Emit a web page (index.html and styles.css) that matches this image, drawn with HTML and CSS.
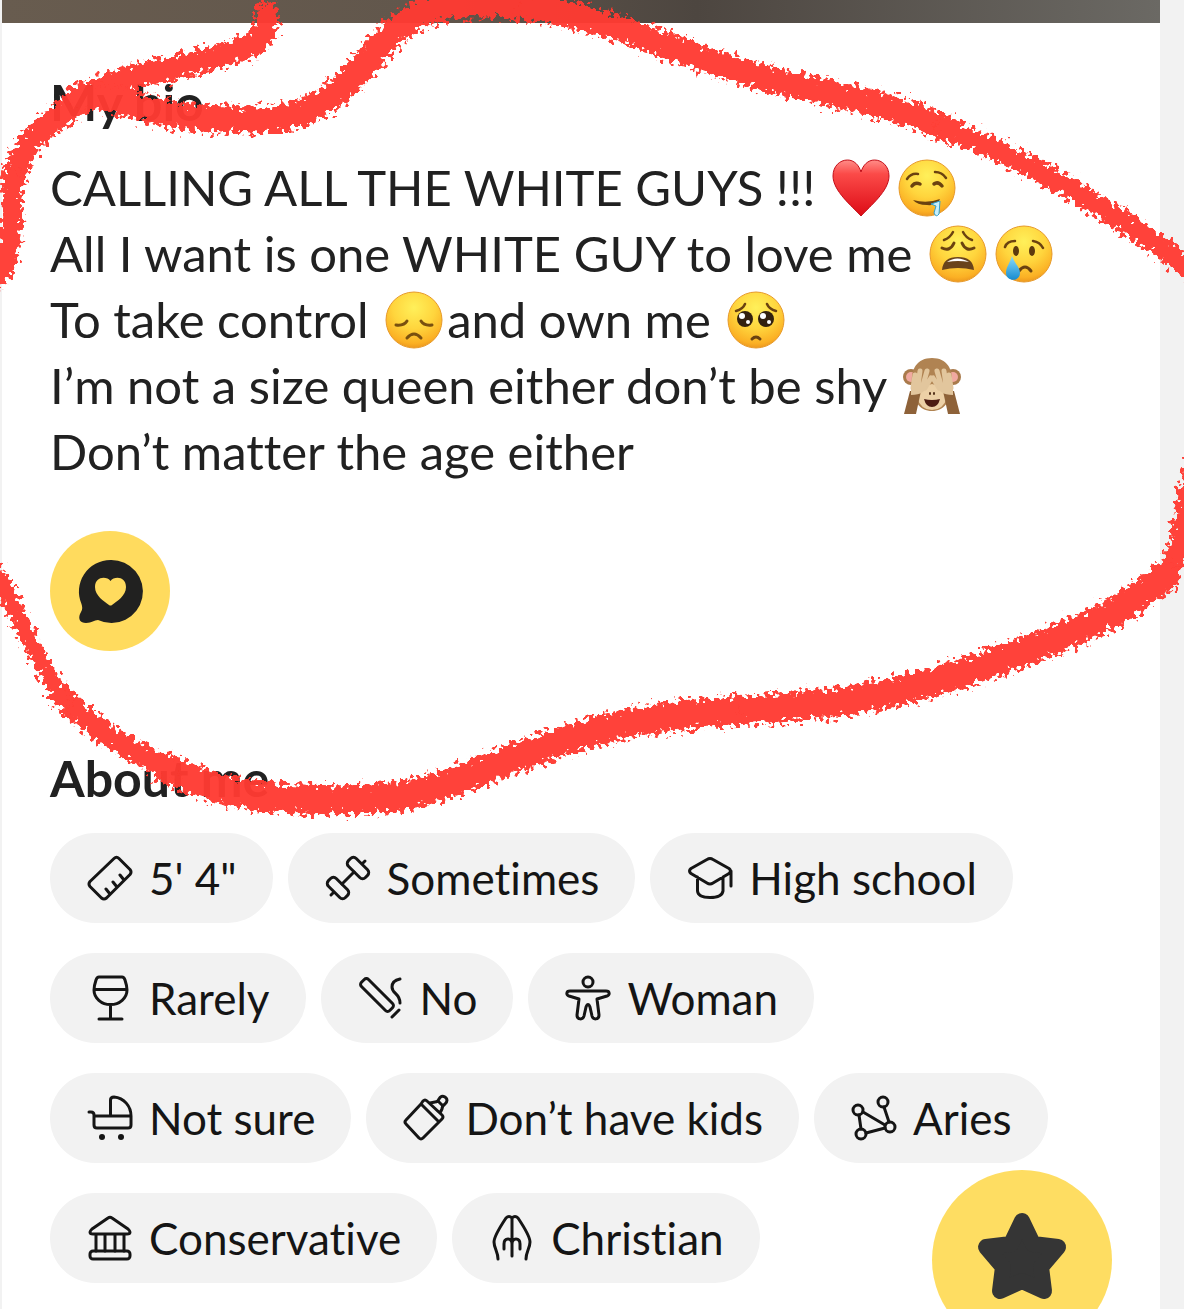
FILE: index.html
```html
<!DOCTYPE html>
<html lang="en">
<head>
  <meta charset="UTF-8">
  <meta name="viewport" content="width=device-width, initial-scale=1.0">
  <title>Profile</title>
  <link rel="stylesheet" href="styles.css">
</head>
<body>
  <!-- Shared emoji gradients -->
  <svg class="defs" aria-hidden="true">
    <defs>
      <radialGradient id="face" cx="50%" cy="28%" r="75%">
        <stop offset="0" stop-color="#fff05a"/>
        <stop offset="0.5" stop-color="#ffd53d"/>
        <stop offset="0.85" stop-color="#fbb024"/>
        <stop offset="1" stop-color="#e8901c"/>
      </radialGradient>
      <linearGradient id="heart" x1="0" y1="0" x2="0" y2="1">
        <stop offset="0" stop-color="#ff8d88"/>
        <stop offset="0.25" stop-color="#fb4a48"/>
        <stop offset="1" stop-color="#dd0b16"/>
      </linearGradient>
      <linearGradient id="tear" x1="0" y1="0" x2="0" y2="1">
        <stop offset="0" stop-color="#8bdcfb"/>
        <stop offset="1" stop-color="#168bd0"/>
      </linearGradient>
    </defs>
  </svg>

  <main class="profile">
    <div class="photo"></div>

    <section class="bio">
      <h2>My bio</h2>
      <p>
        CALLING ALL THE WHITE GUYS !!!
        <svg class="emoji" viewBox="0 0 58 58" role="img" aria-label="red heart"><path d="M29 57C20 47 1 32 1 17C1 7 8 1 15.500 1C22 1 27 6 29 13C31 6 36 1 42.500 1C50 1 57 7 57 17C57 32 38 47 29 57Z" fill="url(#heart)" stroke="#c30d17"/></svg><svg class="emoji" viewBox="0 0 58 58" role="img" aria-label="drooling face"><circle cx="29" cy="29" r="28" fill="url(#face)" stroke="#e79a2b"/><g fill="none" stroke="#6b4210" stroke-width="2.500" stroke-linecap="round"><path d="M9 20Q13 14 20 15M37 13Q44 13 48 19"/><path d="M14 27Q17 23 22 25M36 25Q40 22 44 27" stroke-width="3.500"/></g><path d="M15 41Q29 45 42 40Q39 47 29 46Q19 46 15 41Z" fill="#6b4210"/><path d="M33 45L42 42L41 55Q38 59 36 54L38 47Z" fill="#c6effc" stroke="#349fc9"/></svg><br>
        All I want is one WHITE GUY to love me
        <svg class="emoji" viewBox="0 0 58 58" role="img" aria-label="weary face"><circle cx="29" cy="29" r="28" fill="url(#face)" stroke="#e79a2b"/><g fill="none" stroke="#6b4210" stroke-width="2.500" stroke-linecap="round"><path d="M15 15Q21 13 24 7M34 7Q37 13 43 15"/><path d="M13 23Q21 27 25 18M33 18Q37 27 45 23" stroke-width="3"/></g><path d="M13 45Q14 32 29 32Q44 32 45 45Q29 41 13 45Z" fill="#69431b"/><path d="M18 37Q28 30 40 37Q29 35 18 37Z" fill="#fff"/></svg><svg class="emoji" viewBox="0 0 58 58" role="img" aria-label="crying face"><circle cx="29" cy="29" r="28" fill="url(#face)" stroke="#e79a2b"/><g fill="none" stroke="#6b4210" stroke-width="2.500" stroke-linecap="round"><path d="M10 22Q12 16 20 16M38 16Q45 17 48 23"/><path d="M24 46Q30 38 36 46" stroke-width="3"/></g><ellipse cx="21" cy="26" rx="3" ry="5" fill="#5d3a0e"/><ellipse cx="37" cy="26" rx="3" ry="5" fill="#5d3a0e"/><path d="M17 31C15 38 11 42 11 48C11 57 25 57 25 48C25 42 19 38 17 31Z" fill="url(#tear)"/></svg><br>
        To take control
        <svg class="emoji" viewBox="0 0 58 58" role="img" aria-label="disappointed face"><circle cx="29" cy="29" r="28" fill="url(#face)" stroke="#e79a2b"/><g fill="none" stroke="#79500f" stroke-width="3" stroke-linecap="round"><path d="M11 34Q19 35 22 30M36 30Q39 35 47 34"/><path d="M22 47Q29 39 36 47"/></g></svg>and own me
        <svg class="emoji" viewBox="0 0 58 58" role="img" aria-label="pleading face"><circle cx="29" cy="29" r="28" fill="url(#face)" stroke="#e79a2b"/><g fill="none" stroke="#6b4210" stroke-width="2.500" stroke-linecap="round"><path d="M9 20Q16 18 18 13M40 13Q42 18 49 20"/><path d="M25 48Q29 44 33 48" stroke-width="3"/></g><circle cx="18" cy="28" r="8" fill="#33210f"/><circle cx="39" cy="28" r="8" fill="#33210f"/><g fill="#fff"><circle cx="15" cy="25" r="3"/><circle cx="36" cy="25" r="3"/><circle cx="21" cy="31" r="2"/><circle cx="42" cy="31" r="2"/></g></svg><br>
        I’m not a size queen either don’t be shy
        <svg class="emoji" viewBox="0 0 58 58" role="img" aria-label="see-no-evil monkey"><circle cx="8" cy="20" r="8" fill="#a97a4b"/><circle cx="50" cy="20" r="8" fill="#a97a4b"/><circle cx="8" cy="20" r="5" fill="#f0a9a0"/><circle cx="50" cy="20" r="5" fill="#f0a9a0"/><path d="M29 1C44 1 50 12 49 26C49 44 41 54 29 54S9 44 9 26C8 12 14 1 29 1Z" fill="#b08352"/><path d="M29 27Q43 30 44 41Q40 53 29 53T14 41Q15 30 29 27Z" fill="#ecd0a6"/><path d="M21 42Q29 44 37 42Q35 50 29 50T21 42Z" fill="#4c1c13"/><path d="M27 36v1M31 36v1" stroke="#55331c" stroke-width="2" stroke-linecap="round"/><path d="M7 34L18 34L13 57H1Z" fill="#8e6239"/><path d="M51 34L40 34L45 57H57Z" fill="#8e6239"/><g fill="none" stroke="#e2c69d" stroke-width="5" stroke-linecap="round"><path d="M10 31L12 18M15 29L17 14M20 28L24 14M22 31L28 21"/><path d="M48 31L46 18M43 29L41 14M38 28L34 14M36 31L30 21"/></g><path d="M8 27L24 27Q23 38 8 38Z" fill="#e2c69d"/><path d="M50 27L34 27Q35 38 50 38Z" fill="#e2c69d"/></svg><br>
        Don’t matter the age either
      </p>
      <button class="react" type="button" aria-label="React to bio">
        <svg viewBox="0 0 120 120" aria-hidden="true">
          <path d="M60.500 29A31.500 31.500 0 1 1 48 89C44 89 42 92 36 92C30 92 28 88 30 83C32 79 33 78 31.500 73A31.500 31.500 0 0 1 60.500 29Z" fill="#212120"/>
          <path d="M60.500 50C64 45 76 45 76 56C76 65 67 70 62 74Q60.500 75 59 74C54 70 45 65 45 56C45 45 57 45 60.500 50Z" fill="#ffdb5e"/>
        </svg>
      </button>
    </section>

    <section class="about">
      <h2>About me</h2>
      <ul class="chips">
        <li class="chip">
          <svg class="icon" viewBox="0 0 48 48" aria-hidden="true"><path d="M28 4.500Q30.500 2 33 4.500L44 15.500Q46 18 44 20.500L20.500 44Q18 46 15.500 44L4 32.500Q2 30 4 27.500ZM38 26L34 21M31 33L27 28M24 40L20 35"/></svg>
          5' 4"
        </li>
        <li class="chip">
          <svg class="icon" viewBox="0 0 48 48" aria-hidden="true"><rect x="-12" y="-5.500" width="24" height="11" rx="4" transform="translate(34 14) rotate(45)"/><rect x="-12" y="-5.500" width="24" height="11" rx="4" transform="translate(14 34) rotate(45)"/><path d="M30 18L18 30M39 9L41 7M7 41L9 39"/></svg>
          Sometimes
        </li>
        <li class="chip">
          <svg class="icon" viewBox="0 0 48 48" aria-hidden="true"><path d="M21 5.500Q24 3.500 27 5.500L43 14.500Q46 17 43 19.500L27 29Q24 31 21 29L5 19.500Q2 17 5 14.500ZM11.500 23V37Q12 43.500 24 43.500T37 37V23M45 17V32"/></svg>
          High school
        </li>
        <li class="chip">
          <svg class="icon" viewBox="0 0 48 48" aria-hidden="true"><path d="M13 3H36Q38 3 39 6Q41 12 41 16A16.500 14.500 0 0 1 8 16Q8 12 10 6Q11 3 13 3ZM8 15.500H41M24.500 31V45M13 45H36"/></svg>
          Rarely
        </li>
        <li class="chip">
          <svg class="icon" viewBox="0 0 48 48" aria-hidden="true"><rect x="-20" y="-5" width="40" height="10" rx="3" transform="translate(20 21) rotate(45)"/><path d="M43 5C38 6 35 9 35 13C35 20 43 19 43 29M42 36L35 43"/></svg>
          No
        </li>
        <li class="chip">
          <svg class="icon" viewBox="0 0 48 48" aria-hidden="true"><circle cx="24" cy="8" r="5"/><path d="M6 17H42C46 17 46 21 43 22L33 25L35 41C35 46 29 46 28 42L26 33Q24 28 22 33L20 42C19 46 13 46 13 41L15 25L5 22C2 21 2 17 6 17Z"/></svg>
          Woman
        </li>
        <li class="chip">
          <svg class="icon" viewBox="0 0 48 48" aria-hidden="true"><path d="M3 18H5Q8 18 8 21V31Q8 34 11 34H42Q45 34 45 31V22H8M24.500 22V6Q24.500 3 28 3C38 4 45 12 45 22"/><circle class="solid" cx="16" cy="43" r="3"/><circle class="solid" cx="35" cy="43" r="3"/></svg>
          Not sure
        </li>
        <li class="chip">
          <svg class="icon" viewBox="0 0 48 48" aria-hidden="true"><path d="M19 10L4 26Q2 28 4 30L17 44Q19 46 21 44L37 28M19 10L37 28L40 25Q42 23 40 21L25 7Q23 5 21 7ZM28 9L33 8Q36 8 37 5Q39 1 43 3Q47 6 43 10Q40 12 40 15L38 19M36 7L41 12"/></svg>
          Don’t have kids
        </li>
        <li class="chip">
          <svg class="icon" viewBox="0 0 48 48" aria-hidden="true"><circle cx="8" cy="16" r="5"/><circle cx="33" cy="8" r="5"/><circle cx="40" cy="33" r="5"/><circle cx="11" cy="40" r="5"/><path d="M13 18L35 31M34 13L39 28M35 34L16 39M9 21L11 35"/></svg>
          Aries
        </li>
        <li class="chip">
          <svg class="icon" viewBox="0 0 48 48" aria-hidden="true"><path d="M22 4Q24 2.500 26 4L42 15Q44 17 44 18Q44 20 41 20H7Q4 20 4 18Q4 17 6 15ZM10 20V37M19 20V37M29 20V37M38 20V37"/><rect x="4" y="37" width="40" height="8" rx="3"/></svg>
          Conservative
        </li>
        <li class="chip">
          <svg class="icon" viewBox="0 0 48 48" aria-hidden="true"><path d="M10 45C10 38 6 34 6 28C6 22 16 7 18 4Q21 1 24 4Q27 1 30 4C32 7 42 22 42 28C42 34 38 38 38 45M24 4V42M16 35V30Q16 25 20 25T24 30Q24 25 28 25T32 30V35"/></svg>
          Christian
        </li>
      </ul>
    </section>
  </main>

  <button class="superswipe" type="button" aria-label="SuperSwipe">
    <svg viewBox="0 0 180 180" aria-hidden="true"><path d="M90 51L101 74L126 77L109 97L112 121L90 111L68 121L71 97L54 77L79 74Z" fill="#353535" stroke="#353535" stroke-width="16" stroke-linejoin="round"/></svg>
  </button>

  <!-- Hand-drawn marker around the bio -->
  <svg class="marker" viewBox="0 0 1184 1309" aria-hidden="true">
    <defs>
      <filter id="crayon" filterUnits="userSpaceOnUse" x="-40" y="-40" width="1264" height="900">
        <feTurbulence type="fractalNoise" baseFrequency="0.2" numOctaves="2" seed="4" result="grain"/>
        <feDisplacementMap in="SourceGraphic" in2="grain" scale="22" xChannelSelector="R" yChannelSelector="G"/>
        <feGaussianBlur stdDeviation="0.7"/>
      </filter>
    </defs>
    <g filter="url(#crayon)">
      <path stroke-width="24" d="M266 14C270 50 235 50 200 61C150 75 110 78 92 95C55 118 18 140 14 182"/>
      <path stroke-width="21" d="M14 180C8 210 14 240 4 266L-10 285"/>
      <path stroke-width="27" d="M80 96C120 95 150 115 190 117C240 120 285 125 315 107C365 78 375 38 420 14C450 0 500 3 530 8"/>
      <path stroke-width="26" d="M530 8C600 16 660 45 730 68C800 90 880 98 950 130"/>
      <path stroke-width="21" d="M945 128C1030 161 1110 208 1194 272"/>
      <path stroke-width="21" d="M1194 470C1180 510 1192 545 1160 580"/>
      <path stroke-width="29" d="M1164 577C1110 623 1050 641 990 664C910 693 840 707 724 711"/>
      <path stroke-width="29" d="M724 712C620 717 570 739 500 763C430 795 390 803 300 799C240 799 200 785 165 767"/>
      <path stroke-width="22" d="M170 770C125 747 85 724 60 694"/>
      <path stroke-width="17" d="M64 700C36 663 24 620 -6 570"/>
    </g>
  </svg>
</body>
</html>
```
FILE: styles.css
```css
* {
  box-sizing: border-box;
}

body {
  position: relative;
  min-height: 100vh;
  margin: 0;
  background-color: #f2f2f2;
  color: #212121;
  font-family: Lato, "Liberation Sans", sans-serif;
  font-variant-ligatures: none;
  overflow-x: hidden;
}

.defs {
  position: absolute;
  width: 0;
  height: 0;
}

.profile {
  min-height: 100vh;
  margin: 0 24px 0 2px;
  background-color: #fff;
}

.photo {
  height: 23px;
  background: linear-gradient(90deg, #685c4f, #62574c 35%, #4d4640 60%, #6b6964);
}

.bio {
  padding: 46px 48px 0;
}

.about {
  padding: 94px 48px 26px;
}

h2 {
  margin: 0;
  font-size: 50px;
  line-height: 66px;
  font-weight: 700;
}

.bio p {
  margin: 19px 0 47px;
  font-size: 49px;
  line-height: 66px;
}

.emoji {
  width: 58px;
  height: 58px;
  margin: 0 4px;
  vertical-align: -11px;
}

button {
  padding: 0;
  border: none;
  border-radius: 50%;
  cursor: pointer;
}

button svg {
  display: block;
  width: 100%;
}

.react {
  display: block;
  width: 120px;
  height: 120px;
  background-color: #ffdb5e;
}

.chips {
  display: flex;
  flex-wrap: wrap;
  gap: 30px 15px;
  margin: 22px 0 0;
  padding: 0;
  list-style: none;
}

.chip {
  display: flex;
  align-items: center;
  gap: 15px;
  height: 90px;
  padding: 0 36px;
  border-radius: 45px;
  background-color: #f2f2f2;
  color: #151515;
  font-size: 44px;
  white-space: nowrap;
}

.icon {
  flex: none;
  width: 48px;
  height: 48px;
  fill: none;
  stroke: #151515;
  stroke-width: 3;
  stroke-linecap: round;
  stroke-linejoin: round;
}

.icon .solid {
  fill: #151515;
  stroke: none;
}

.superswipe {
  position: fixed;
  right: 72px;
  bottom: -41px;
  width: 180px;
  height: 180px;
  background-color: #fedd62;
}

.marker {
  position: absolute;
  top: 0;
  left: 0;
  width: 100%;
  fill: none;
  stroke: #ff3a30;
  stroke-linecap: round;
  stroke-linejoin: round;
  opacity: 0.96;
  pointer-events: none;
}
```
